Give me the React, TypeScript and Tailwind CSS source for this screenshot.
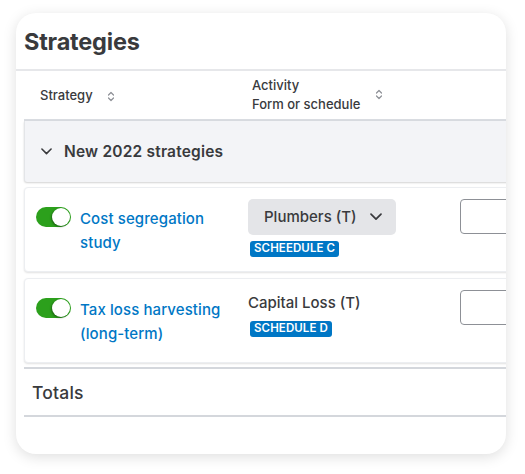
import React from "react";

const SortIcon = () => (
  <svg width="8" height="11" viewBox="0 0 8 11" fill="none" className="shrink-0">
    <path d="M1.5 4 L4 1.5 L6.5 4" stroke="#8d9096" strokeWidth="1.2" strokeLinecap="round" strokeLinejoin="round" />
    <path d="M1.5 7 L4 9.5 L6.5 7" stroke="#8d9096" strokeWidth="1.2" strokeLinecap="round" strokeLinejoin="round" />
  </svg>
);

const ChevronDown = ({ w = 12 }: { w?: number }) => (
  <svg width={w} height={w * 0.6} viewBox="0 0 12 7" fill="none" className="shrink-0">
    <path d="M1 1 L6 6 L11 1" stroke="#393a3d" strokeWidth="1.7" strokeLinecap="round" strokeLinejoin="round" />
  </svg>
);

const Toggle = () => (
  <div className="relative w-[35px] h-[20px] rounded-full bg-[#2ca01c] shrink-0">
    <div className="absolute right-[1px] top-[1px] w-[18px] h-[18px] rounded-full bg-white shadow-[-1px_1px_2px_rgba(0,0,0,0.35)]" />
  </div>
);

const Badge = ({ children }: { children: React.ReactNode }) => (
  <span className="flex items-center h-[16px] px-[4px] rounded-[3px] bg-[#0077c5] text-white text-[11.5px] font-semibold tracking-[0.1px] leading-none">
    {children}
  </span>
);

export default function App() {
  return (
    <div
      className="w-[525px] h-[474px] bg-white pt-[13px] pl-[16px] text-[#393a3d]"
      style={{ fontFamily: "Inter, 'Open Sans', sans-serif" }}
    >
      <div className="w-[490px] h-[441px] rounded-[20px] bg-white overflow-hidden shadow-[0_3px_14px_rgba(0,0,0,0.13)] flex flex-col">
        {/* Title */}
        <div className="h-[58px] shrink-0 pl-[8px] pt-[14px] border-b-2 border-[#e6e7ea]">
          <h1 className="text-[23.5px] font-bold leading-[30px] text-[#393a3d] tracking-[-0.2px]">Strategies</h1>
        </div>

        <div className="pl-[8px] flex flex-col">
          <div className="w-[560px] flex flex-col">
            {/* Column headers */}
            <div className="h-[50px] flex items-center border-b-2 border-[#d9dce1] text-[13px] font-medium">
              <div className="w-[228px] pl-[16px] pt-[2px] flex items-center gap-[14px]">
                <span>Strategy</span>
                <SortIcon />
              </div>
              <div className="w-[212px] flex items-center gap-[13px]">
                <div className="leading-[19px]">
                  <div>Activity</div>
                  <div>Form or schedule</div>
                </div>
                <div className="pb-[2px] ml-[2px]">
                  <SortIcon />
                </div>
              </div>
            </div>

            {/* Group row */}
            <div className="h-[61px] bg-[#f3f4f7] flex items-center pl-[16px] gap-[12px] rounded-bl-[3px] shadow-[0_1px_2px_rgba(0,0,0,0.18)] border-l border-[#e3e5e8]">
              <ChevronDown w={11} />
              <span className="text-[15.5px] font-semibold tracking-[0.2px]">New 2022 strategies</span>
            </div>

            {/* Row 1 */}
            <div className="mt-[5px] h-[85px] bg-white rounded-l-[4px] border border-[#eceef1] shadow-[0_1px_2px_rgba(0,0,0,0.12)] flex items-start pl-[11px]">
              <div className="w-[212px] flex items-start gap-[9px] pt-[19px]">
                <Toggle />
                <span className="text-[15px] font-medium text-[#0077c5] leading-[24px] tracking-[0.1px]">
                  Cost segregation
                  <br />
                  study
                </span>
              </div>
              <div className="w-[212px] pt-[11px] flex flex-col items-start gap-[6px]">
                <div className="w-[148px] h-[36px] rounded-[5px] bg-[#e4e5e8] flex items-center justify-between pl-[16px] pr-[14px]">
                  <span className="text-[15px] font-medium">Plumbers (T)</span>
                  <ChevronDown w={12} />
                </div>
                <div className="pl-[2px] flex">
                  <Badge>SCHEEDULE C</Badge>
                </div>
              </div>
              <div className="pt-[11px]">
                <div className="w-[100px] h-[35px] rounded-[4px] border border-[#8d9096] bg-white" />
              </div>
            </div>

            {/* Row 2 */}
            <div className="mt-[6px] h-[85px] bg-white rounded-l-[4px] border border-[#eceef1] shadow-[0_1px_2px_rgba(0,0,0,0.12)] flex items-start pl-[11px]">
              <div className="w-[212px] flex items-start gap-[9px] pt-[19px]">
                <Toggle />
                <span className="text-[15px] font-medium text-[#0077c5] leading-[24px] tracking-[0.1px]">
                  Tax loss harvesting
                  <br />
                  (long-term)
                </span>
              </div>
              <div className="w-[212px] pt-[14px] flex flex-col items-start gap-[8px]">
                <span className="text-[15px] font-medium leading-[20px]">Capital Loss (T)</span>
                <div className="pl-[2px] flex">
                  <Badge>SCHEDULE D</Badge>
                </div>
              </div>
              <div className="pt-[11px]">
                <div className="w-[100px] h-[35px] rounded-[4px] border border-[#8d9096] bg-white" />
              </div>
            </div>

            {/* Totals */}
            <div className="mt-[4px] h-[50px] border-t-2 border-b-2 border-[#d4d7dc] flex items-center pl-[8px] pt-[3px]">
              <span className="text-[17.5px] font-medium tracking-[0.2px]">Totals</span>
            </div>
          </div>
        </div>
      </div>
    </div>
  );
}
